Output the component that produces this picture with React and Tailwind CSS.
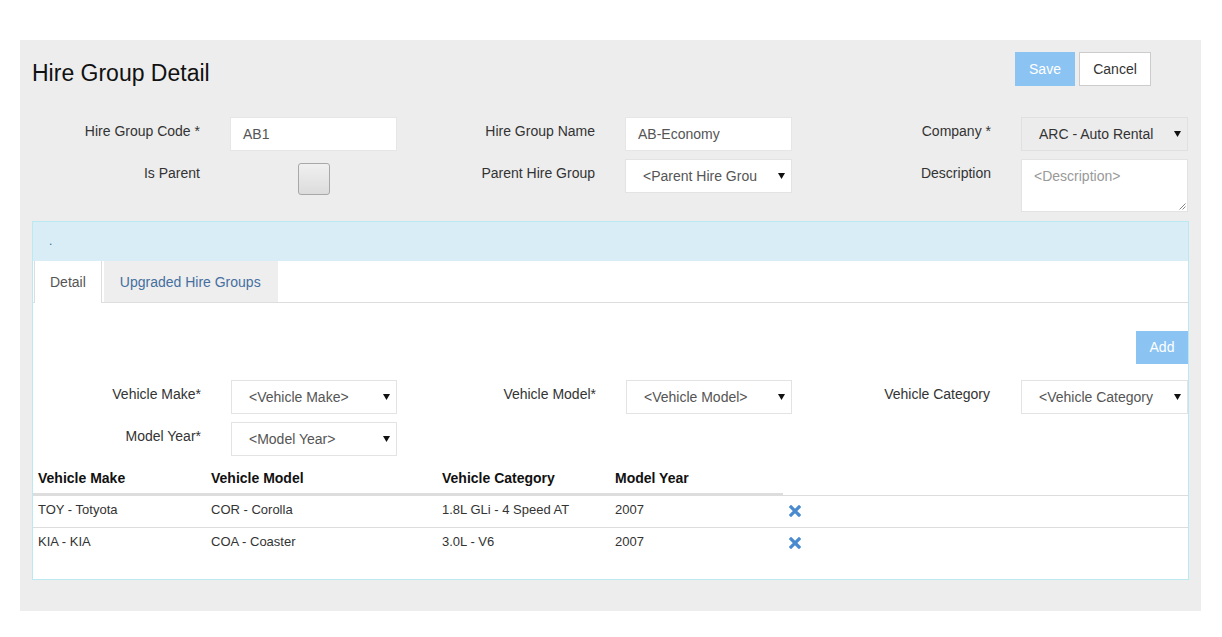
import React from "react";

const FONT = "font-['Liberation_Sans',Arial,Helvetica,sans-serif]";

function Arrow() {
  return (
    <svg width="7" height="6" viewBox="0 0 7 6" className="shrink-0">
      <path d="M0 0 L7 0 L3.5 6 Z" fill="#111" />
    </svg>
  );
}

function FakeSelect({ text, disabled, width = "w-[167px]" }) {
  return (
    <div
      className={`${width} h-[34px] flex items-center pl-[17px] pr-[6px] border ${
        disabled
          ? "bg-[#ececec] border-[#e0e0e0] text-[#333]"
          : "bg-white border-[#e3e3e3] text-[#555]"
      }`}
    >
      <span className="whitespace-nowrap leading-[20px]">{text}</span>
      <span className="flex-1" />
      <Arrow />
    </div>
  );
}

function RemoveIcon() {
  return (
    <svg width="12" height="12" viewBox="0 0 12 12">
      <path
        d="M2 2 L10 10 M10 2 L2 10"
        stroke="#4a8bcf"
        strokeWidth="3.2"
        strokeLinecap="square"
      />
    </svg>
  );
}

const rows = [
  { make: "TOY - Totyota", model: "COR - Corolla", category: "1.8L GLi - 4 Speed AT", year: "2007" },
  { make: "KIA - KIA", model: "COA - Coaster", category: "3.0L - V6", year: "2007" },
];

export default function App() {
  return (
    <div className={`min-h-screen bg-white pt-[40px] pl-[20px] pr-[21px] ${FONT} text-[14px] text-[#333]`}>
      <div className="bg-[#ededed] h-[571px] px-[12px] pt-[12px]">
        {/* HEADER */}
        <div className="flex justify-between items-start h-[34px]">
          <h1 className="mt-[9px] text-[23px] leading-[25px] text-[#111]">
            Hire Group Detail
          </h1>
          <div className="flex gap-[4px] mr-[38px]">
            <button className="w-[60px] h-[34px] bg-[#8bc3f3] text-white">
              Save
            </button>
            <button className="w-[72px] h-[34px] bg-white border border-[#ccc] text-[#333]">
              Cancel
            </button>
          </div>
        </div>

        {/* FORM */}
        <div className="mt-[31px] flex h-[34px]">
          <div className="flex w-[365px]">
            <label className="w-[168px] text-right pt-[4px] leading-[20px]">Hire Group Code *</label>
            <div className="ml-[30px] w-[167px] h-[34px] bg-white border border-[#e6e6e6] pl-[12px] flex items-center text-[#555]">
              AB1
            </div>
          </div>
          <div className="flex w-[395px]">
            <label className="w-[198px] text-right pt-[4px] leading-[20px]">Hire Group Name</label>
            <div className="ml-[30px] w-[167px] h-[34px] bg-white border border-[#e6e6e6] pl-[12px] flex items-center text-[#555]">
              AB-Economy
            </div>
          </div>
          <div className="flex w-[396px]">
            <label className="w-[199px] text-right pt-[4px] leading-[20px]">Company *</label>
            <div className="ml-[30px]">
              <FakeSelect text="ARC - Auto Rental" disabled />
            </div>
          </div>
        </div>

        <div className="mt-[8px] flex h-[53px]">
          <div className="flex w-[365px]">
            <label className="w-[168px] text-right pt-[4px] leading-[20px]">Is Parent</label>
            <div className="ml-[30px] w-[167px] flex justify-center">
              <div className="mt-[4px] w-[32px] h-[32px] rounded-[3px] border border-[#a8a8a8] bg-gradient-to-b from-[#f0f0f0] to-[#dcdcdc]" />
            </div>
          </div>
          <div className="flex w-[395px]">
            <label className="w-[198px] text-right pt-[4px] leading-[20px]">Parent Hire Group</label>
            <div className="ml-[30px]">
              <FakeSelect text="<Parent Hire Grou" />
            </div>
          </div>
          <div className="flex w-[396px]">
            <label className="w-[199px] text-right pt-[4px] leading-[20px]">Description</label>
            <div className="ml-[30px] relative w-[167px] h-[53px] bg-white border border-[#e3e3e3] pl-[12px] pt-[6px] leading-[20px] text-[#999]">
              &lt;Description&gt;
              <svg width="7" height="7" viewBox="0 0 7 7" className="absolute right-[1px] bottom-[1px]">
                <path d="M6.5 0.5 L0.5 6.5 M6.5 3.5 L3.5 6.5" stroke="#888" strokeWidth="1" />
              </svg>
            </div>
          </div>
        </div>

        {/* PANEL */}
        <div className="mt-[9px] w-[1157px] h-[359px] border border-[#bce8f1] bg-white">
          <div className="h-[39px] bg-[#d9edf7] pl-[16px] pt-[9px] text-[12px] leading-[20px] text-[#31708f]">
            .
          </div>

          {/* TABS */}
          <div className="flex pl-[1px] border-b border-[#ddd] h-[42px]">
            <div className="h-[42px] px-[15px] pt-[1px] bg-white border-l border-r border-[#ddd] flex items-center text-[#555]">
              Detail
            </div>
            <div className="ml-[2px] h-[41px] pl-[16px] pr-[17px] pt-[1px] bg-[#eee] flex items-center text-[#456fa0]">
              Upgraded Hire Groups
            </div>
          </div>

          <div className="flex justify-end mt-[28px]">
            <button className="w-[52px] h-[33px] bg-[#8bc3f3] text-white">Add</button>
          </div>

          <div className="mt-[16px] flex h-[34px]">
            <div className="flex w-[364px]">
              <label className="w-[168px] text-right pt-[4px] leading-[20px]">Vehicle Make*</label>
              <div className="ml-[30px]">
                <FakeSelect text="<Vehicle Make>" width="w-[166px]" />
              </div>
            </div>
            <div className="flex w-[395px]">
              <label className="w-[199px] text-right pt-[4px] leading-[20px]">Vehicle Model*</label>
              <div className="ml-[30px]">
                <FakeSelect text="<Vehicle Model>" width="w-[166px]" />
              </div>
            </div>
            <div className="flex w-[396px]">
              <label className="w-[198px] text-right pt-[4px] leading-[20px]">Vehicle Category</label>
              <div className="ml-[31px]">
                <FakeSelect text="<Vehicle Category" />
              </div>
            </div>
          </div>

          <div className="mt-[8px] flex h-[34px]">
            <div className="flex w-[364px]">
              <label className="w-[168px] text-right pt-[4px] leading-[20px]">Model Year*</label>
              <div className="ml-[30px]">
                <FakeSelect text="<Model Year>" width="w-[166px]" />
              </div>
            </div>
          </div>

          {/* TABLE */}
          <div className="mt-[7px]">
            <div className="flex font-bold text-[#111]">
              <div className="w-[173px] h-[32px] pl-[5px] pt-[1px] flex items-center border-b-2 border-[#ddd]">Vehicle Make</div>
              <div className="w-[231px] h-[32px] pl-[5px] pt-[1px] flex items-center border-b-2 border-[#ddd]">Vehicle Model</div>
              <div className="w-[173px] h-[32px] pl-[5px] pt-[1px] flex items-center border-b-2 border-[#ddd]">Vehicle Category</div>
              <div className="w-[173px] h-[32px] pl-[5px] pt-[1px] flex items-center border-b-2 border-[#ddd]">Model Year</div>
            </div>
            {rows.map((r, i) => (
              <div key={i} className="flex h-[32px] border-t border-[#ddd] text-[13px] text-[#333]">
                <div className="w-[173px] pl-[5px] pt-[4px] leading-[20px]">{r.make}</div>
                <div className="w-[231px] pl-[5px] pt-[4px] leading-[20px]">{r.model}</div>
                <div className="w-[173px] pl-[5px] pt-[4px] leading-[20px]">{r.category}</div>
                <div className="w-[173px] pl-[5px] pt-[4px] leading-[20px]">{r.year}</div>
                <div className="pl-[6px] pt-[9px]">
                  <RemoveIcon />
                </div>
              </div>
            ))}
          </div>
        </div>
      </div>
    </div>
  );
}
